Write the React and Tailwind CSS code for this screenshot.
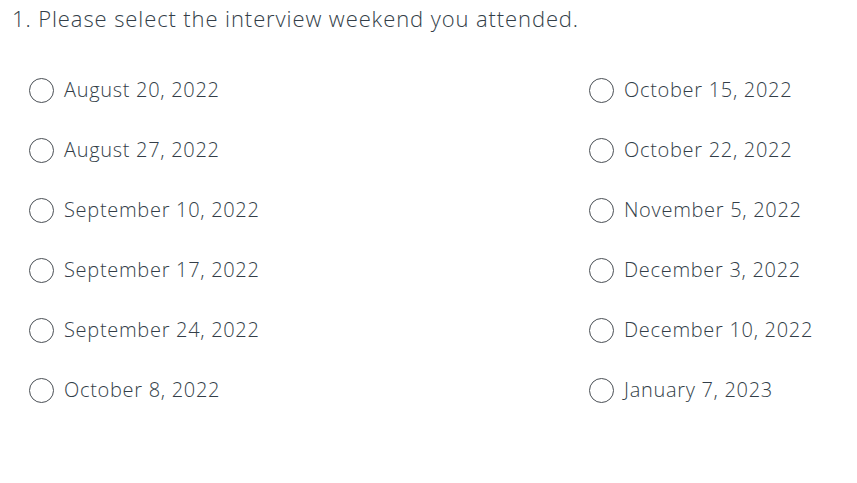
import React from 'react';

const left = [
  'August 20, 2022',
  'August 27, 2022',
  'September 10, 2022',
  'September 17, 2022',
  'September 24, 2022',
  'October 8, 2022',
];

const right = [
  'October 15, 2022',
  'October 22, 2022',
  'November 5, 2022',
  'December 3, 2022',
  'December 10, 2022',
  'January 7, 2023',
];

function Option({ label }) {
  return (
    <label className="flex items-center h-[60px] cursor-pointer">
      <span className="w-[25px] h-[25px] rounded-full border-[1.5px] border-[#4a4f55] bg-white shrink-0" />
      <span className="ml-[10px] text-[20px] tracking-[0.7px] text-[#333e48]">{label}</span>
    </label>
  );
}

export default function App() {
  return (
    <div className="bg-white w-[857px] h-[483px] font-['Open_Sans',sans-serif] font-light">
      <h1 className="pl-[12px] pt-[2px] text-[22px] leading-[32px] tracking-[0.9px] text-[#333e48] font-light">
        1. Please select the interview weekend you attended.
      </h1>
      <div className="grid grid-cols-[560px_1fr] pl-[29px] pt-[26px]">
        <div className="flex flex-col">
          {left.map(l => <Option key={l} label={l} />)}
        </div>
        <div className="flex flex-col">
          {right.map(l => <Option key={l} label={l} />)}
        </div>
      </div>
    </div>
  );
}
